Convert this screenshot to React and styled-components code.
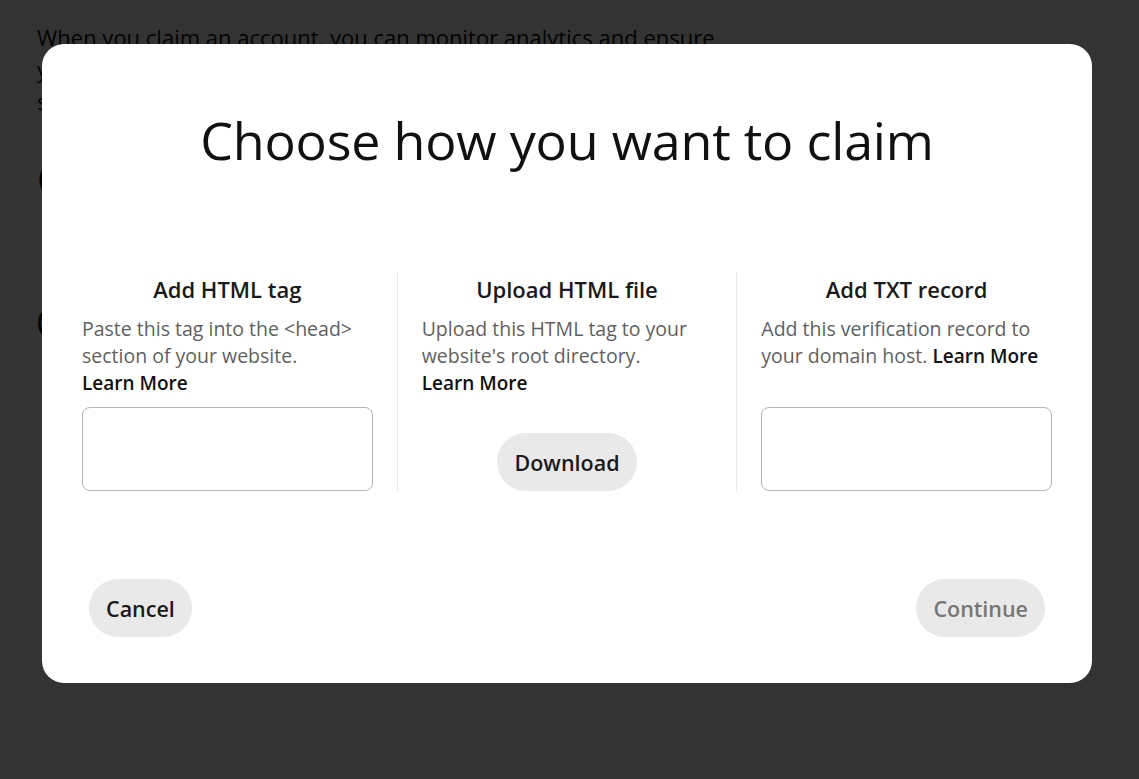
import React from "react";
import styled, { createGlobalStyle } from "styled-components";

const Global = createGlobalStyle`
  html, body { margin: 0; padding: 0; background: #fff; }
  body { font-family: "Open Sans", "Noto Sans", sans-serif; color: #111; }
  * { box-sizing: border-box; }
`;

const Page = styled.main`
  padding: 21px 37px;
  width: 780px;
`;

const Intro = styled.p`
  margin: 0 0 38px;
  font-size: 22px;
  line-height: 32px;
  color: #111;
`;

const PageHeading = styled.h2`
  margin: 0 0 ${(p) => p.$gap || 0}px;
  font-size: ${(p) => p.$size || 40}px;
  font-weight: 600;
  line-height: 1.2;
`;

const Overlay = styled.div`
  position: fixed;
  inset: 0;
  background: rgba(0, 0, 0, 0.8);
  display: flex;
  align-items: flex-start;
  justify-content: flex-start;
  padding: 44px 0 0 42px;
`;

const Modal = styled.section`
  width: 1050px;
  height: 639px;
  background: #fff;
  border-radius: 22px;
  padding: 60px 40px 46px;
  display: flex;
  flex-direction: column;
`;

const Title = styled.h1`
  margin: 0;
  text-align: center;
  font-size: 52px;
  font-weight: 400;
  letter-spacing: -0.2px;
  line-height: 72px;
  color: #111;
`;

const Columns = styled.div`
  margin-top: 95px;
  display: grid;
  grid-template-columns: 1fr 1px 1fr 1px 1fr;
  column-gap: 24px;
  height: 220px;
`;

const Divider = styled.div`
  background: #e9e9e9;
`;

const Column = styled.div`
  display: flex;
  flex-direction: column;
  align-items: stretch;
`;

const ColumnTitle = styled.h3`
  margin: 0 0 10px;
  text-align: center;
  font-size: 22px;
  font-weight: 600;
  line-height: 32px;
  padding-top: 2px;
  color: #1a1a1a;
`;

const Description = styled.p`
  margin: 0;
  font-size: 19.5px;
  line-height: 27px;
  color: #5f5f5f;
`;

const Link = styled.a`
  color: #111;
  font-weight: 600;
  font-size: 19px;
  white-space: nowrap;
  text-decoration: none;
`;

const CodeBox = styled.textarea`
  margin-top: auto;
  height: 84px;
  width: 100%;
  resize: none;
  border: 1px solid #b5b5b5;
  border-radius: 8px;
  background: #fff;
  font-family: "Open Sans", sans-serif;
  font-size: 16px;
  color: transparent;
  outline: none;
`;

const PillButton = styled.button`
  height: 58px;
  padding: 0 17px;
  border: none;
  border-radius: 29px;
  background: #e9e9e9;
  font-family: "Open Sans", "Noto Sans", sans-serif;
  font-size: 21.5px;
  font-weight: 600;
  color: ${(p) => (p.$disabled ? "#767676" : "#1a1a1a")};
  cursor: pointer;
`;

const CenteredButton = styled(PillButton)`
  margin-top: auto;
  align-self: center;
`;

const Footer = styled.footer`
  margin-top: auto;
  display: flex;
  justify-content: space-between;
  align-items: center;
  padding: 0 7px;
`;

export default function App() {
  return (
    <>
      <Global />
      <Page>
        <Intro>
          When you claim an account, you can monitor analytics and ensure
          your content is credited to you across Pinterest. Learn more about
          site claiming.
        </Intro>
        <PageHeading $size={40} $gap={102}>Claim your website</PageHeading>
        <PageHeading $size={26}>(optional) Claim other accounts</PageHeading>
      </Page>
      <Overlay>
        <Modal role="dialog" aria-labelledby="claim-title">
          <Title id="claim-title">Choose how you want to claim</Title>
          <Columns>
            <Column>
              <ColumnTitle>Add HTML tag</ColumnTitle>
              <Description>
                Paste this tag into the &lt;head&gt; section of your website.{" "}
                <Link href="#">Learn More</Link>
              </Description>
              <CodeBox readOnly defaultValue="" />
            </Column>
            <Divider />
            <Column>
              <ColumnTitle>Upload HTML file</ColumnTitle>
              <Description>
                Upload this HTML tag to your website's root directory.{" "}
                <Link href="#">Learn More</Link>
              </Description>
              <CenteredButton>Download</CenteredButton>
            </Column>
            <Divider />
            <Column>
              <ColumnTitle>Add TXT record</ColumnTitle>
              <Description>
                Add this verification record to your domain host.{" "}
                <Link href="#">Learn More</Link>
              </Description>
              <CodeBox readOnly defaultValue="" />
            </Column>
          </Columns>
          <Footer>
            <PillButton>Cancel</PillButton>
            <PillButton $disabled disabled>
              Continue
            </PillButton>
          </Footer>
        </Modal>
      </Overlay>
    </>
  );
}
